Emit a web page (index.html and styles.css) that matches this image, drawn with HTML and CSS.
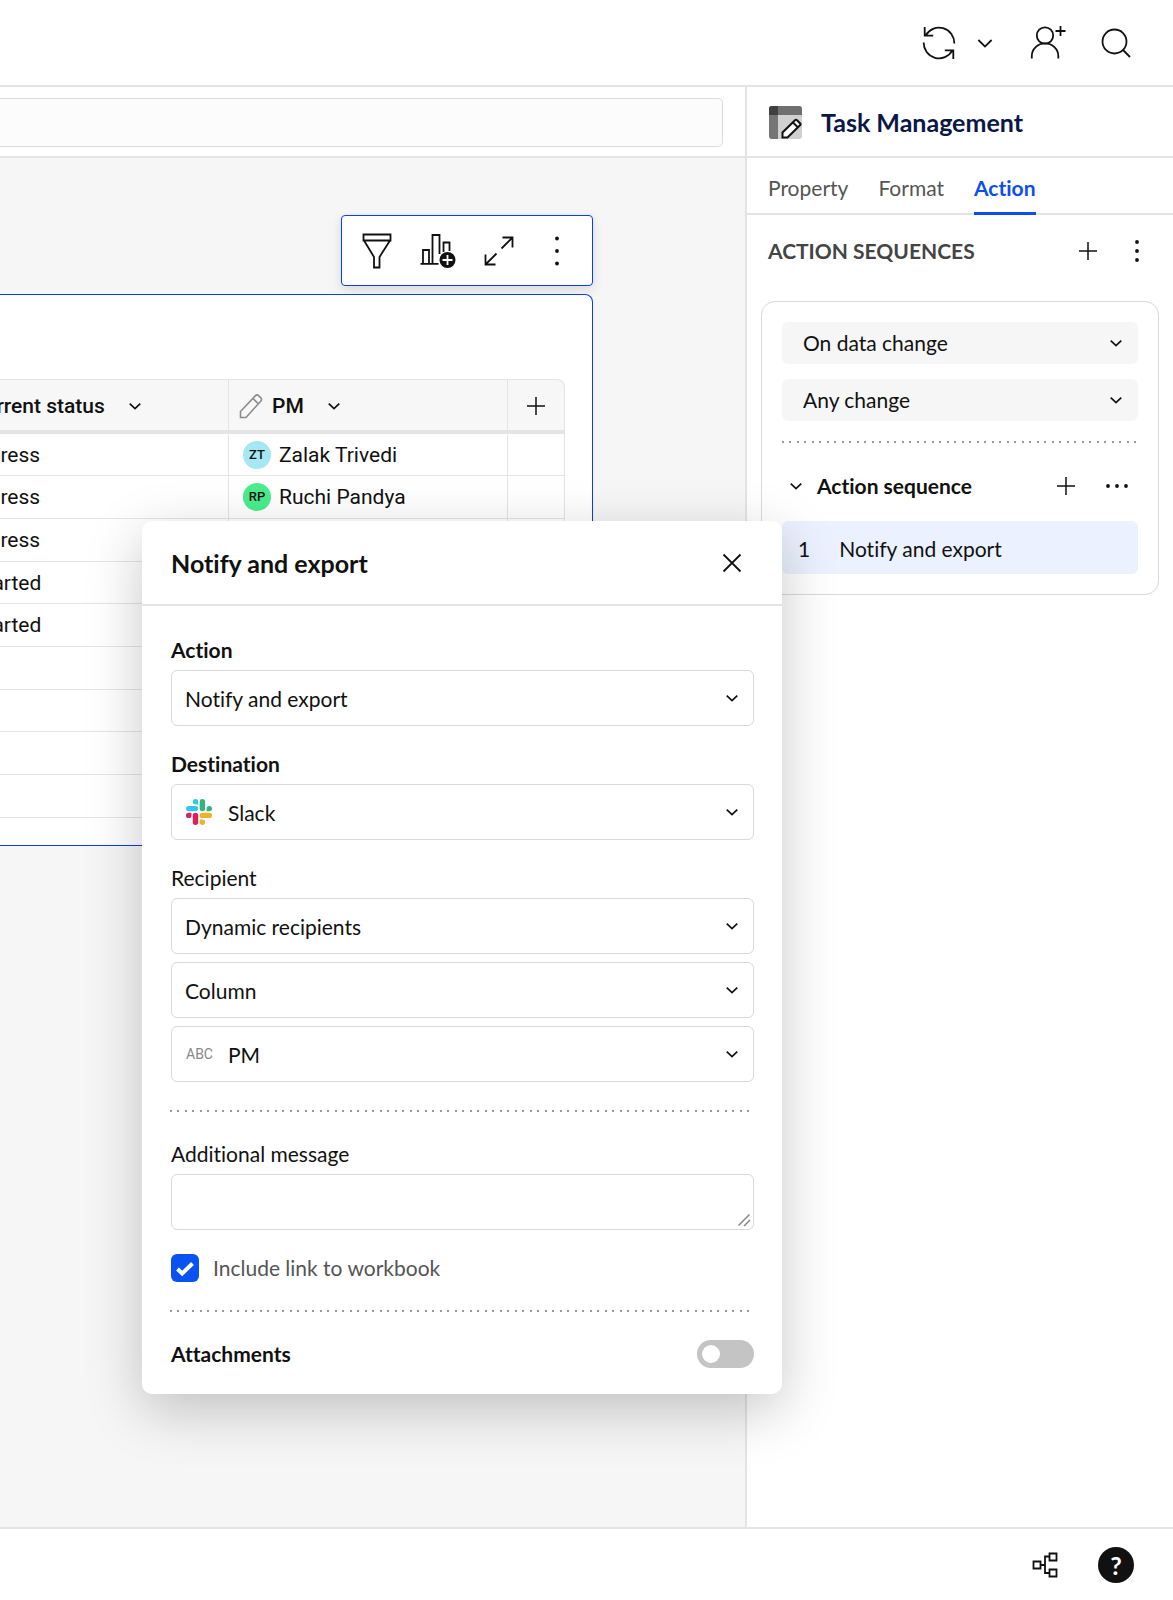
FILE: index.html
```html
<!DOCTYPE html>
<html lang="en">
<head>
    <meta charset="UTF-8">
    <meta name="viewport" content="width=device-width, initial-scale=1.0">
    <title>Task Management</title>
    <link rel="stylesheet" href="styles.css">
</head>
<body>
    <!-- Shared icons -->
    <svg class="sprite" aria-hidden="true">
        <symbol id="chevron" viewBox="0 0 12 12"><path d="M1.500 4l4.500 4.200L10.500 4" /></symbol>
        <symbol id="plus" viewBox="0 0 20 20"><path d="M10 1v18M1 10h18" stroke-width="1.500" /></symbol>
    </svg>

    <!-- Top bar -->
    <header class="topbar">
        <button class="icon-btn" aria-label="Refresh">
            <svg width="34" height="34" viewBox="0 0 34 34"><path d="M2.700 1v8.600h8.500M3.600 9.600A15.300 15.300 0 0 1 32.300 17.500M31.300 33V24.400H22.800M30.400 24.400A15.300 15.300 0 0 1 1.700 16.500" /></svg>
        </button>
        <button class="icon-btn refresh-menu" aria-label="Refresh options">
            <svg width="18" height="18" viewBox="0 0 12 12"><path d="M1.600 4L6 8.400l4.400-4.400" stroke-width="1.200" /></svg>
        </button>
        <button class="icon-btn" aria-label="Share">
            <svg width="36" height="36" viewBox="0 0 36 36"><circle cx="15" cy="10.500" r="8.200" /><path d="M1.800 33.500v-2.500a13.200 12.500 0 0 1 26.500 0v2.500M30.500 1v10M25.500 6h10" /></svg>
        </button>
        <button class="icon-btn" aria-label="Search">
            <svg width="30" height="30" viewBox="0 0 30 30"><circle cx="13.500" cy="13.500" r="12" /><path d="M22 22l7 7" /></svg>
        </button>
    </header>

    <div class="workspace">
        <main class="main">
            <div class="formula-bar">
                <input type="text" class="formula-input" aria-label="Formula">
            </div>

            <div class="canvas">
                <div class="element-toolbar">
                    <button class="icon-btn" aria-label="Filter">
                        <svg width="30" height="36" viewBox="0 0 30 36"><path d="M1.500 1.500h27v6h-27zM2 7.500l10 16.500v10.500h5.500V24l10.500-16.500" /></svg>
                    </button>
                    <button class="icon-btn" aria-label="Add chart">
                        <svg width="36" height="36" viewBox="0 0 36 36"><path d="M0.500 30.800h18M3 30.500V17h6v13.500M12.500 30.500V2h7v19M23.500 19V9.500h6V18" /><circle cx="27.500" cy="27" r="8" class="solid" /><path d="M27.500 22v10M22.500 27h10" class="light" /></svg>
                    </button>
                    <button class="icon-btn" aria-label="Expand">
                        <svg width="30" height="30" viewBox="0 0 30 30"><path d="M18.500 1.500h10v10M28.500 1.500L17.500 12.500M11.500 28.500h-10v-10M1.500 28.500L12.500 17.500" /></svg>
                    </button>
                    <button class="icon-btn" aria-label="More">
                        <svg width="30" height="30" viewBox="0 0 30 30"><g class="dots"><circle cx="15" cy="2.500" r="1.900" /><circle cx="15" cy="15" r="1.900" /><circle cx="15" cy="27.500" r="1.900" /></g></svg>
                    </button>
                </div>

                <section class="table-card">
                    <table class="task-table">
                        <colgroup>
                            <col class="col-status">
                            <col class="col-pm">
                            <col class="col-add">
                        </colgroup>
                        <thead>
                            <tr>
                                <th class="status-head">
                                    <div class="head-cell">
                                        <svg class="pencil" width="24" height="26" viewBox="0 0 24 26"><path d="M1.500 24.500v-6L16.500 2.600q1.500-1.500 3 0l2.400 2.300q1.300 1.500 0 3L7 24.500zM14 5.500l5 5" /></svg>
                                        <span>Current status</span>
                                        <svg class="caret" width="14" height="14"><use href="#chevron" /></svg>
                                    </div>
                                </th>
                                <th>
                                    <div class="head-cell">
                                        <svg class="pencil" width="24" height="26" viewBox="0 0 24 26"><path d="M1.500 24.500v-6L16.500 2.600q1.500-1.500 3 0l2.400 2.300q1.300 1.500 0 3L7 24.500zM14 5.500l5 5" /></svg>
                                        <span>PM</span>
                                        <svg class="caret" width="14" height="14"><use href="#chevron" /></svg>
                                    </div>
                                </th>
                                <th>
                                    <button class="icon-btn add-column" aria-label="Add column"><svg width="20" height="20"><use href="#plus" /></svg></button>
                                </th>
                            </tr>
                        </thead>
                        <tbody>
                            <tr><td>In Progress</td><td><div class="person"><span class="avatar avatar-blue">ZT</span>Zalak Trivedi</div></td><td></td></tr>
                            <tr><td>In Progress</td><td><div class="person"><span class="avatar avatar-green">RP</span>Ruchi Pandya</div></td><td></td></tr>
                            <tr><td>In Progress</td><td></td><td></td></tr>
                            <tr><td>Not Started</td><td></td><td></td></tr>
                            <tr><td>Not Started</td><td></td><td></td></tr>
                            <tr><td></td><td></td><td></td></tr>
                            <tr><td></td><td></td><td></td></tr>
                            <tr><td></td><td></td><td></td></tr>
                            <tr><td></td><td></td><td></td></tr>
                        </tbody>
                    </table>
                </section>
            </div>
        </main>

        <!-- Side panel -->
        <aside class="panel">
            <div class="panel-title">
                <svg width="33" height="33" viewBox="0 0 33 33">
                    <rect width="33" height="33" rx="3" fill="#d0d0d0" />
                    <path d="M3 0h27q3 0 3 3v6H0V3q0-3 3-3z" fill="#6f6f6f" />
                    <path d="M0 9h9v24H3q-3 0-3-3z" fill="#757575" />
                    <path d="M3 0h6v9H0V3q0-3 3-3z" fill="#404040" />
                    <path d="M13.500 31.500v-5L26 14.200q1-1 2 0l3 3q1 1 0 2L18.500 31.500z" fill="#fff" stroke="#111" stroke-width="2" />
                    <path d="M24 16.500l4.500 4.500" stroke="#111" stroke-width="2" />
                </svg>
                <h1>Task Management</h1>
            </div>

            <nav class="tabs">
                <a href="#property">Property</a>
                <a href="#format">Format</a>
                <a href="#action" class="active">Action</a>
            </nav>

            <div class="section-head">
                <h2>ACTION SEQUENCES</h2>
                <button class="icon-btn" aria-label="Add action sequence"><svg width="20" height="20"><use href="#plus" /></svg></button>
                <button class="icon-btn" aria-label="More">
                    <svg width="22" height="22" viewBox="0 0 22 22"><g class="dots"><circle cx="11" cy="2" r="1.900" /><circle cx="11" cy="11" r="1.900" /><circle cx="11" cy="20" r="1.900" /></g></svg>
                </button>
            </div>

            <div class="sequence-card">
                <div class="select select-grey">
                    <select aria-label="Trigger"><option>On data change</option></select>
                    <svg class="caret" width="14" height="14"><use href="#chevron" /></svg>
                </div>
                <div class="select select-grey">
                    <select aria-label="Change type"><option>Any change</option></select>
                    <svg class="caret" width="14" height="14"><use href="#chevron" /></svg>
                </div>
                <div class="dotted"></div>
                <div class="sequence-head">
                    <svg class="caret" width="14" height="14"><use href="#chevron" /></svg>
                    <h3>Action sequence</h3>
                    <button class="icon-btn" aria-label="Add action"><svg width="20" height="20"><use href="#plus" /></svg></button>
                    <button class="icon-btn" aria-label="More">
                        <svg width="24" height="20" viewBox="0 0 24 20"><g class="dots"><circle cx="2" cy="10" r="1.900" /><circle cx="11" cy="10" r="1.900" /><circle cx="20" cy="10" r="1.900" /></g></svg>
                    </button>
                </div>
                <button class="step"><span>1</span><span>Notify and export</span></button>
            </div>
        </aside>

        <!-- Action editor -->
        <section class="popover" role="dialog" aria-labelledby="popover-title">
            <div class="popover-head">
                <h2 id="popover-title">Notify and export</h2>
                <button class="icon-btn" aria-label="Close"><svg width="20" height="20" viewBox="0 0 20 20"><path d="M1.500 1.500l17 17M18.500 1.500l-17 17" /></svg></button>
            </div>

            <form class="popover-body">
                <div class="field">
                    <label for="action" class="strong">Action</label>
                    <div class="select">
                        <select id="action"><option>Notify and export</option></select>
                        <svg class="caret" width="14" height="14"><use href="#chevron" /></svg>
                    </div>
                </div>

                <div class="field">
                    <label for="destination" class="strong">Destination</label>
                    <div class="select with-icon">
                        <select id="destination"><option>Slack</option></select>
                        <svg class="lead" width="26" height="26" viewBox="0 0 26 26">
                            <g fill="#36c5f0"><path d="M9.500 0a2.700 2.700 0 0 1 2.700 2.700v2.700H9.500a2.700 2.700 0 0 1 0-5.400z" /><rect x="0" y="6.900" width="12.200" height="5.400" rx="2.700" /></g>
                            <g fill="#2eb67d"><rect x="13.700" y="0" width="5.400" height="12.300" rx="2.700" /><path d="M26 9.600a2.700 2.700 0 0 1-2.700 2.700h-2.700V9.600a2.700 2.700 0 0 1 5.400 0z" /></g>
                            <g fill="#ecb22e"><path d="M16.400 26a2.700 2.700 0 0 1-2.700-2.700v-2.700h2.700a2.700 2.700 0 0 1 0 5.400z" /><rect x="13.700" y="13.700" width="12.300" height="5.400" rx="2.700" /></g>
                            <g fill="#e01e5a"><rect x="6.800" y="13.700" width="5.400" height="12.300" rx="2.700" /><path d="M0 16.400a2.700 2.700 0 0 1 2.700-2.700h2.700v2.700a2.700 2.700 0 0 1-5.400 0z" /></g>
                        </svg>
                        <svg class="caret" width="14" height="14"><use href="#chevron" /></svg>
                    </div>
                </div>

                <div class="field">
                    <label for="recipient">Recipient</label>
                    <div class="select-stack">
                        <div class="select">
                            <select id="recipient"><option>Dynamic recipients</option></select>
                            <svg class="caret" width="14" height="14"><use href="#chevron" /></svg>
                        </div>
                        <div class="select">
                            <select aria-label="Recipient source"><option>Column</option></select>
                            <svg class="caret" width="14" height="14"><use href="#chevron" /></svg>
                        </div>
                        <div class="select with-icon">
                            <select aria-label="Recipient column"><option>PM</option></select>
                            <span class="lead type-tag">ABC</span>
                            <svg class="caret" width="14" height="14"><use href="#chevron" /></svg>
                        </div>
                    </div>
                </div>

                <div class="dotted"></div>

                <div class="field">
                    <label for="message">Additional message</label>
                    <div class="message-box">
                        <textarea id="message" rows="1"></textarea>
                        <svg class="grip" width="14" height="14" viewBox="0 0 14 14"><path d="M1.500 12.500l11-11M7 13l6-6" /></svg>
                    </div>
                </div>

                <label class="check-row">
                    <input type="checkbox" checked>
                    <svg width="28" height="28" viewBox="0 0 28 28"><path d="M6.500 15l4.700 4.500L21.500 9.500" /></svg>
                    <span>Include link to workbook</span>
                </label>

                <div class="dotted"></div>

                <div class="toggle-row">
                    <label for="attachments" class="strong">Attachments</label>
                    <input type="checkbox" role="switch" id="attachments" class="toggle">
                </div>
            </form>
        </section>
    </div>

    <!-- Bottom bar -->
    <footer class="bottombar">
        <button class="icon-btn" aria-label="Lineage">
            <svg width="26" height="26" viewBox="0 0 26 26"><path d="M1.500 9.500h7v7h-7zM17.500 1.500h7v7h-7zM17.500 17.500h7v7h-7zM8.500 13H13M17.500 4.500H13v16.500h4.500" /></svg>
        </button>
        <button class="help" aria-label="Help">?</button>
    </footer>
</body>
</html>
```

FILE: styles.css
```css
* {
    box-sizing: border-box;
}

body {
    margin: 0;
    min-height: 100vh;
    display: flex;
    flex-direction: column;
    font-family: Lato, sans-serif;
    font-size: 21px;
    font-variant-ligatures: none;
    line-height: 28px;
    color: #111;
    background-color: white;
}

h1, h2, h3 {
    margin: 0;
    font-size: 21px;
}

button, input, select, textarea {
    font: inherit;
    font-variant-ligatures: none;
    color: inherit;
}

svg {
    display: block;
    fill: none;
    stroke: #111;
    stroke-width: 1.8;
}

.sprite {
    position: absolute;
    width: 0;
    height: 0;
}

.dots {
    fill: #111;
    stroke: none;
}

.solid {
    fill: #111;
    stroke: none;
}

.light {
    stroke: white;
}

.caret {
    stroke: #111;
    stroke-width: 1.5;
}

.icon-btn {
    display: flex;
    padding: 0;
    border: none;
    background: none;
    cursor: pointer;
}

.dotted {
    height: 2px;
    background: linear-gradient(90deg, #999 2px, transparent 2px 7px, #999 7px 9px, transparent 9px) 0 0 / 15px 2px;
}

/* Top bar */
.topbar {
    display: flex;
    align-items: center;
    justify-content: flex-end;
    height: 87px;
    padding-right: 42px;
    border-bottom: 2px solid #e4e4e4;
}

.refresh-menu {
    margin: 0 36px 0 20px;
}

.topbar .icon-btn:last-child {
    margin-left: 35px;
}

.workspace {
    position: relative;
    flex: 1;
    display: grid;
    grid-template-columns: minmax(0, 1fr) 428px;
}

.main {
    display: flex;
    flex-direction: column;
    min-width: 0;
}

.formula-bar {
    padding: 11px 22px 9px 0;
    border-bottom: 2px solid #e4e4e4;
}

.formula-input {
    display: block;
    width: 100%;
    height: 49px;
    border: 1px solid #dcdcdc;
    border-left: none;
    border-radius: 0 5px 5px 0;
    background-color: #fcfcfc;
}

/* Canvas */
.canvas {
    flex: 1;
    display: flex;
    flex-direction: column;
    align-items: flex-end;
    gap: 8px;
    padding: 57px 152px 40px 0;
    background-color: #f6f6f6;
    overflow: hidden;
}

.element-toolbar {
    display: flex;
    align-items: center;
    gap: 28px;
    height: 71px;
    padding: 0 20px;
    border: 1px solid #0a3cff;
    border-radius: 4px;
    background-color: white;
    box-shadow: 0 4px 12px rgba(0, 0, 0, 0.12);
}

.table-card {
    width: 100%;
    height: 552px;
    display: flex;
    justify-content: flex-end;
    padding: 84px 27px 0 0;
    border: 1px solid #0a3cff;
    border-left: none;
    border-radius: 0 8px 0 0;
    background-color: white;
}

.task-table {
    flex: none;
    align-self: flex-start;
    width: 645px;
    table-layout: fixed;
    border-spacing: 0;
    font-family: Roboto, sans-serif;
}

.col-pm {
    width: 279px;
}

.col-add {
    width: 57px;
}

.task-table th {
    height: 55px;
    padding: 1px 10px 0;
    border-top: 1px solid #e4e4e4;
    border-right: 1px solid #e4e4e4;
    border-bottom: 4px solid #e4e4e4;
    background-color: #f7f7f7;
    font-weight: 500;
    text-align: left;
}

.task-table .status-head {
    padding-left: 18px;
}

.task-table th:last-child {
    border-top-right-radius: 8px;
}

.task-table td {
    height: 43px;
    padding: 0 14px;
    border-right: 1px solid #e4e4e4;
    border-bottom: 1px solid #e4e4e4;
}

/* Every third row is a pixel shorter */
.task-table tr:nth-child(3n + 1) td {
    height: 42px;
}

.head-cell {
    display: flex;
    align-items: center;
    gap: 9px;
}

.head-cell .caret {
    margin-left: 14px;
}

.pencil {
    stroke: #8c8c8c;
    stroke-width: 1.6;
}

.add-column {
    margin: 0 auto;
}

.person {
    display: flex;
    align-items: center;
    gap: 8px;
}

.avatar {
    width: 28px;
    border-radius: 50%;
    font-size: 13px;
    font-weight: 500;
    text-align: center;
}

.avatar-blue {
    background-color: #a5e8f3;
}

.avatar-green {
    background-color: #4aec8c;
}

/* Side panel */
.panel {
    border-left: 2px solid #e4e4e4;
    background-color: white;
}

.panel-title {
    display: flex;
    align-items: center;
    gap: 19px;
    height: 71px;
    padding: 1px 22px 0;
    border-bottom: 2px solid #e4e4e4;
}

.panel-title svg {
    stroke: none;
}

.panel-title h1 {
    font-size: 25px;
    color: #0a1747;
}

.tabs {
    display: flex;
    gap: 30px;
    height: 57px;
    padding: 0 21px;
    border-bottom: 2px solid #e4e4e4;
}

.tabs a {
    height: 57px;
    padding-top: 16px;
    color: #555;
    text-decoration: none;
}

.tabs .active {
    border-bottom: 3px solid #0b4ff0;
    color: #0b4ff0;
    font-weight: bold;
}

.section-head {
    display: flex;
    align-items: center;
    gap: 28px;
    padding: 22px 25px 22px 21px;
}

.section-head h2 {
    flex: 1;
    color: #444;
}

.sequence-card {
    margin: 14px 14px 0;
    padding: 20px;
    border: 1px solid #d9d9d9;
    border-radius: 14px;
}

.select {
    display: grid;
    align-items: center;
}

.select > * {
    grid-area: 1 / 1;
}

.select select {
    appearance: none;
    width: 100%;
    height: 56px;
    padding: 2px 40px 0 13px;
    border: 1px solid #d9d9d9;
    border-radius: 6px;
    background-color: white;
}

.select .caret {
    justify-self: end;
    margin-right: 15px;
    pointer-events: none;
}

.select-grey {
    margin-bottom: 15px;
}

.select-grey select {
    height: 42px;
    padding: 0 40px 0 21px;
    border: none;
    background-color: #f6f6f6;
}

.sequence-card .dotted {
    margin-top: 20px;
}

.sequence-head {
    display: flex;
    align-items: center;
    gap: 30px;
    padding: 29px 8px 21px 7px;
}

.sequence-head h3 {
    flex: 1;
    margin-left: -16px;
}

.step {
    display: flex;
    align-items: center;
    gap: 29px;
    width: 100%;
    height: 53px;
    padding: 2px 16px 0;
    border: none;
    border-radius: 6px;
    background-color: #ebf1fe;
}

/* Action editor */
.popover {
    position: absolute;
    top: 434px;
    right: 391px;
    width: 640px;
    border-radius: 10px;
    background-color: white;
    box-shadow: 0 16px 56px rgba(0, 0, 0, 0.22);
}

.popover-head {
    display: flex;
    align-items: center;
    justify-content: space-between;
    height: 85px;
    padding: 0 40px 0 29px;
    border-bottom: 2px solid #e4e4e4;
}

.popover-head h2 {
    font-size: 25px;
}

.popover-body {
    padding: 30px 28px 26px 29px;
}

.field {
    display: flex;
    flex-direction: column;
    gap: 6px;
    margin-bottom: 24px;
}

.strong {
    font-weight: bold;
}

.select-stack {
    display: flex;
    flex-direction: column;
    gap: 8px;
}

.with-icon select {
    padding-left: 56px;
}

.lead {
    margin-left: 15px;
    stroke: none;
    pointer-events: none;
}

.type-tag {
    font-family: Roboto, sans-serif;
    font-size: 14px;
    color: #888;
}

.popover-body .dotted {
    margin: 28px -1px;
}

.message-box {
    display: grid;
}

.message-box > * {
    grid-area: 1 / 1;
}

.message-box textarea {
    width: 100%;
    height: 56px;
    padding: 13px;
    border: 1px solid #d9d9d9;
    border-radius: 6px;
    resize: none;
}

.grip {
    align-self: end;
    justify-self: end;
    margin: 3px;
    stroke: #888;
    stroke-width: 1.5;
    pointer-events: none;
}

.check-row {
    display: grid;
    grid-template-columns: 28px 1fr;
    gap: 14px;
    color: #555;
}

.check-row input {
    grid-area: 1 / 1;
    appearance: none;
    width: 28px;
    height: 28px;
    margin: 0;
    border-radius: 6px;
    background-color: #b8b8b8;
}

.check-row input:checked {
    background-color: #0b53f0;
}

.check-row svg {
    grid-area: 1 / 1;
    stroke: white;
    stroke-width: 4;
    pointer-events: none;
}

.toggle-row {
    display: flex;
    align-items: center;
    justify-content: space-between;
}

.toggle {
    appearance: none;
    width: 57px;
    height: 28px;
    margin: 0;
    padding: 5px;
    border-radius: 14px;
    background-color: #c4c4c4;
}

.toggle::before {
    content: "";
    display: block;
    width: 18px;
    height: 18px;
    border-radius: 50%;
    background-color: white;
}

.toggle:checked {
    background-color: #0b53f0;
}

.toggle:checked::before {
    margin-left: auto;
}

/* Bottom bar */
.bottombar {
    display: flex;
    align-items: center;
    justify-content: flex-end;
    gap: 40px;
    height: 73px;
    padding-right: 39px;
    border-top: 2px solid #e4e4e4;
    background-color: white;
}

.help {
    width: 36px;
    height: 36px;
    padding: 0;
    border: none;
    border-radius: 50%;
    background-color: #111;
    color: white;
    font-size: 25px;
    font-weight: bold;
}
```
